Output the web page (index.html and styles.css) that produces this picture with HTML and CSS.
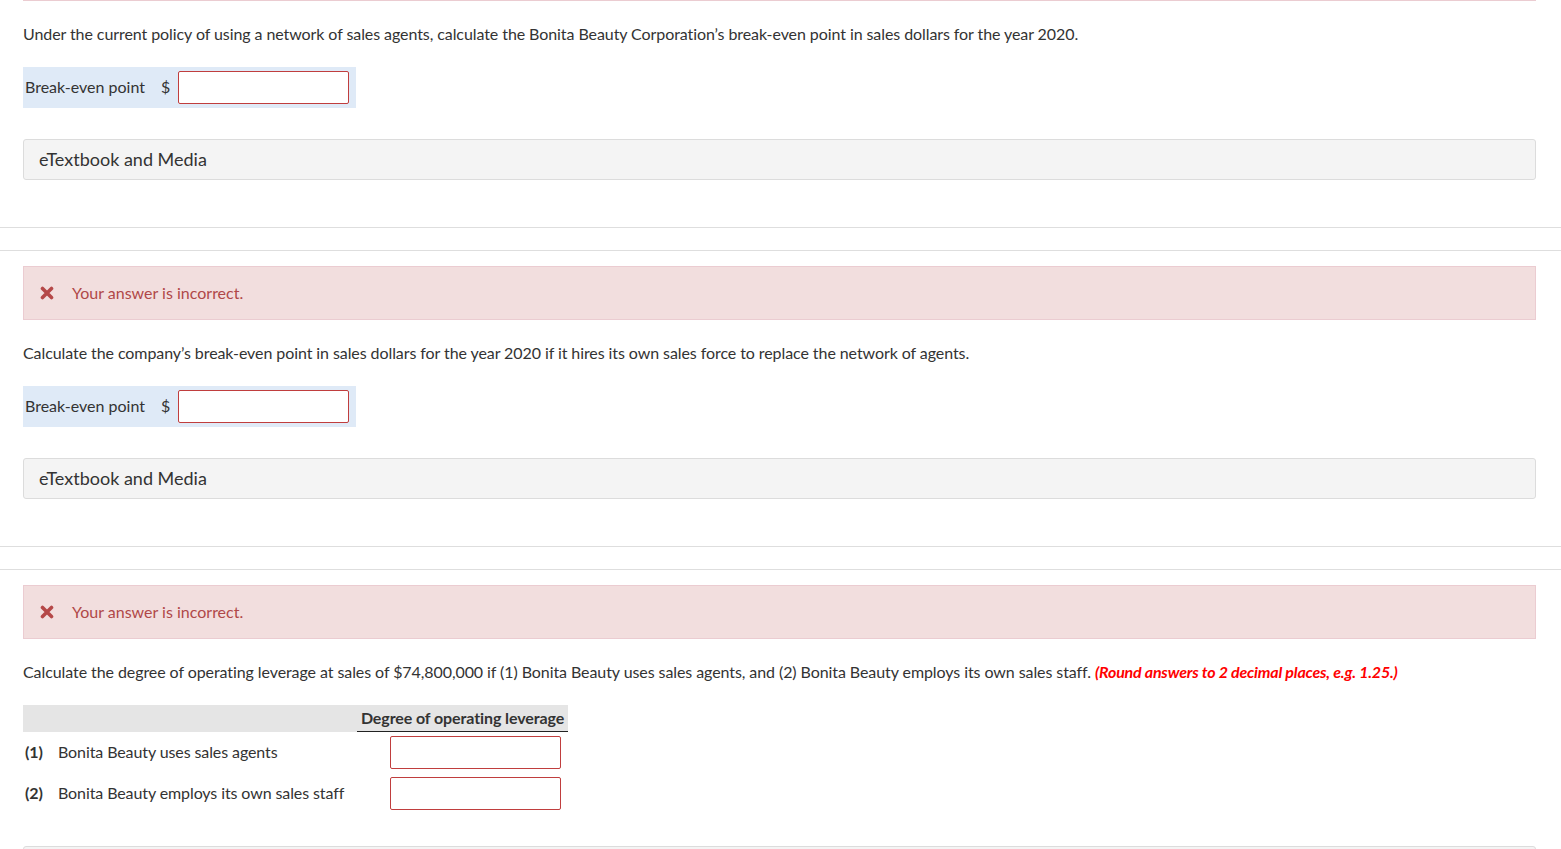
FILE: index.html
```html
<!DOCTYPE html>
<html>
<head>
<meta charset="utf-8">
<link rel="stylesheet" href="styles.css">
</head>
<body>
<div class="page">
  <div class="wrap">
    <div class="prev-edge"></div>
    <p class="q">Under the current policy of using a network of sales agents, calculate the Bonita Beauty Corporation’s break-even point in sales dollars for the year 2020.</p>
    <div class="answer-row">
      <span class="label">Break-even point</span>
      <span class="cur">$</span>
      <span class="input"></span>
    </div>
    <div class="media">eTextbook and Media</div>
  </div>
  <div class="divider"></div>

  <div class="wrap">
    <div class="incorrect">
      <svg class="xicon" viewBox="0 0 14 14" width="14" height="14"><path d="M2.5 2.5 L11.5 11.5 M11.5 2.5 L2.5 11.5" stroke="#b54848" stroke-width="3.6" stroke-linecap="round"/></svg>
      <span>Your answer is incorrect.</span>
    </div>
    <p class="q">Calculate the company’s break-even point in sales dollars for the year 2020 if it hires its own sales force to replace the network of agents.</p>
    <div class="answer-row">
      <span class="label">Break-even point</span>
      <span class="cur">$</span>
      <span class="input"></span>
    </div>
    <div class="media">eTextbook and Media</div>
  </div>
  <div class="divider"></div>

  <div class="wrap">
    <div class="incorrect">
      <svg class="xicon" viewBox="0 0 14 14" width="14" height="14"><path d="M2.5 2.5 L11.5 11.5 M11.5 2.5 L2.5 11.5" stroke="#b54848" stroke-width="3.6" stroke-linecap="round"/></svg>
      <span>Your answer is incorrect.</span>
    </div>
    <p class="q">Calculate the degree of operating leverage at sales of $74,800,000 if (1) Bonita Beauty uses sales agents, and (2) Bonita Beauty employs its own sales staff. <em class="hint">(Round answers to 2 decimal places, e.g. 1.25.)</em></p>
    <div class="dol">
      <div class="dol-head"></div>
      <div class="dol-head col">Degree of operating leverage</div>
      <div class="dol-label"><b>(1)</b><span>Bonita Beauty uses sales agents</span></div>
      <div class="dol-cell"><span class="input"></span></div>
      <div class="dol-label"><b>(2)</b><span>Bonita Beauty employs its own sales staff</span></div>
      <div class="dol-cell"><span class="input"></span></div>
    </div>
    <div class="media next"></div>
  </div>
</div>
</body>
</html>
```

FILE: styles.css
```css
* { box-sizing: border-box; }
html, body { margin: 0; padding: 0; background: #fff; }
body {
  font-family: Lato, "Open Sans", "Liberation Sans", sans-serif;
  font-size: 16px;
  color: #333;
  overflow: hidden;
  height: 849px;
}
.page { width: 1561px; }
.wrap { padding: 0 25px 0 23px; display: flex; flex-direction: column; align-items: flex-start; }
.prev-edge { width: 100%; height: 1px; background: #ebccd1; }
.q { margin: 22px 0; line-height: 21px; padding-bottom: 1px; font-size: 16px; letter-spacing: -0.08px; }
.hint { color: #ff0000; font-weight: 700; font-style: italic; letter-spacing: -0.2px; }
.answer-row {
  display: flex; align-items: center;
  background: #dfeaf7;
  padding: 4px 7px 4px 2px;
  width: 333px;
}
.label { color: #333; width: 136px; padding-bottom: 2px; }
.cur { width: 17px; padding-bottom: 2px; }
.input {
  display: block;
  width: 171px; height: 33px;
  border: 1px solid #c03e3e;
  border-radius: 2px;
  background: #fff;
}
.media {
  margin-top: 31px;
  width: 100%;
  height: 41px;
  background: #f4f4f4;
  border: 1px solid #dcdcdc;
  border-radius: 3px;
  padding: 0 15px 2px;
  display: flex; align-items: center;
  font-size: 18px;
  color: #333;
}
.media.next { margin-top: 32px; height: 10px; }
.divider {
  margin-top: 47px;
  height: 24px;
  border-top: 1px solid #dedede;
  border-bottom: 1px solid #dedede;
  margin-bottom: 15px;
}
.incorrect {
  width: 100%;
  height: 54px;
  background: #f2dede;
  border: 1px solid #ebccd1;
  display: flex; align-items: center;
  padding-left: 16px;
  color: #b04848;
  font-size: 16px;
}
.incorrect span { padding-bottom: 2px; }
.xicon { margin-right: 18px; }
.dol {
  display: grid;
  grid-template-columns: 334px 211px;
}
.dol-head { background: #e5e5e5; height: 27px; }
.dol-head.col {
  font-weight: 700;
  border-bottom: 1px solid #222;
  display: flex; align-items: center; justify-content: center;
  padding-bottom: 1px;
  color: #333;
  letter-spacing: -0.1px;
}
.dol-label {
  display: flex; align-items: center;
  padding-left: 2px;
  padding-bottom: 2px;
  height: 41px;
  letter-spacing: -0.1px;
}
.dol-label b { font-weight: 700; width: 33px; }
.dol-cell {
  display: flex; align-items: center; justify-content: flex-end;
  padding-right: 7px;
  height: 41px;
}
```
